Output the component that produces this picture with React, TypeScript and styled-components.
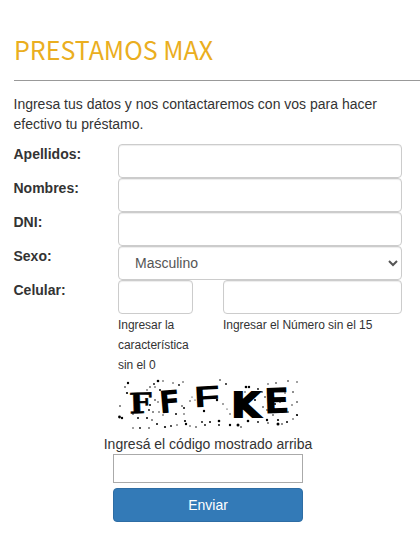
import React from "react";
import styled, { createGlobalStyle } from "styled-components";

const GlobalStyle = createGlobalStyle`
  * {
    box-sizing: border-box;
  }

  body {
    margin: 0;
    background: #fff;
    color: #333;
    font-family: "Liberation Sans", Arial, sans-serif;
    font-size: 14px;
    line-height: 20px;
    overflow: hidden;
  }
`;

const Page = styled.main`
  padding: 31px 0 0 14px;
`;

const Title = styled.h1`
  margin: 0;
  height: 49px;
  color: #eaae20;
  font-family: "Noto Sans CJK SC", sans-serif;
  font-size: 25px;
  font-weight: 400;
  line-height: 36px;
  white-space: nowrap;
`;

const Divider = styled.hr`
  margin: 0 0 13px;
  border: 0;
  border-top: 1px solid #999;
`;

const Intro = styled.p`
  margin: 0 18px 10px -0.5px;
`;

const Row = styled.div`
  display: grid;
  grid-template-columns: 104px 284px;
`;

const Label = styled.label`
  margin-left: -0.5px;
  font-weight: 700;
`;

const Input = styled.input`
  display: block;
  width: 100%;
  height: 34px;
  padding: 6px 12px;
  border: 1px solid #ccc;
  border-radius: 4px;
  background: #fff;
  color: #555;
  font: inherit;
  box-shadow: inset 0 1px 1px rgba(0, 0, 0, 0.075);
`;

const Select = styled(Input).attrs({ as: "select" })`
  padding-right: 0;
`;

const PhoneFields = styled.div`
  display: grid;
  grid-template-columns: 75px 179px;
  column-gap: 30px;
`;

const Hint = styled.small`
  display: block;
  padding-top: 1px;
  font-size: 12px;
  letter-spacing: -0.05px;
`;

const CaptchaArea = styled.div`
  display: flex;
  flex-direction: column;
  align-items: center;
  width: 388px;
`;

const CaptchaImage = styled.svg`
  display: block;
  width: 180px;
  height: 59px;
  font-weight: 700;
`;

const CaptchaInput = styled.input`
  width: 190px;
  height: 29px;
  padding: 2px 6px;
  border: 1px solid #aaa;
  font: inherit;
`;

const SubmitButton = styled.button`
  width: 190px;
  height: 34px;
  margin-top: 5px;
  padding: 6px 12px;
  border: 1px solid #2e6da4;
  border-radius: 4px;
  background: #337ab7;
  color: #fff;
  font: inherit;
`;

const specks = [
  [10, 8, 1.2], [7, 12, 0.8], [9, 18, 1.1], [2, 31, 0.8], [1.5, 42, 1.4],
  [4, 43, 1.2], [15, 39, 0.8], [20, 43, 1], [15, 53, 0.7], [22, 53, 0.9],
  [31, 53, 0.8], [32, 12, 0.8], [36, 9, 0.9], [40, 6, 1.3], [45, 6, 0.7],
  [37, 12, 0.7], [42, 15, 1], [55, 8, 0.7], [65, 7, 0.7], [61, 10, 0.9],
  [29, 15, 0.7], [37, 25, 0.8], [32, 30, 1], [31, 35, 0.9], [35, 37, 0.8],
  [40, 27, 0.7], [41, 37, 0.7], [29, 43, 1], [34, 45, 0.8], [39, 49, 1],
  [47, 52, 1.1], [53, 51, 0.9], [59, 50, 0.7], [64, 31, 0.8], [66, 33, 1],
  [66, 39, 0.7], [67, 46, 1.1], [68, 49, 1.2], [72, 51, 0.7], [78, 52, 0.8],
  [87, 50, 0.9], [84, 47, 0.9], [72, 26, 0.7], [74, 22, 0.6], [58, 39, 1],
  [45, 40, 0.7], [86, 36, 1.2], [77, 25, 0.6],
  [102, 5, 0.8], [108, 9, 0.9], [99, 25, 1.2], [105, 29, 0.7], [109, 34, 0.6],
  [92, 47, 1], [101, 46, 1.3], [101, 50, 0.9], [112, 50, 1.2], [120, 50, 1.5],
  [123, 52, 0.8], [112, 39, 0.7], [128, 12, 1.3], [131, 12, 1.2], [127, 17, 0.7],
  [140, 14, 0.9], [150, 9, 0.7], [158, 8, 0.8], [170, 6, 0.8], [179, 7, 0.7],
  [144, 17, 0.8], [120, 20, 0.9], [130, 21, 0.8], [137, 25, 1], [147, 22, 0.8],
  [157, 29, 1], [162, 27, 0.8], [145, 32, 0.8], [149, 35, 0.8], [130, 46, 1.3],
  [140, 47, 0.9], [149, 45, 1.2], [150, 48, 0.8], [155, 40, 0.8], [160, 45, 1.1],
  [160, 49, 1.5], [169, 47, 1], [164, 49, 0.8], [174, 30, 0.7], [179, 27, 0.8],
  [179, 40, 1.1], [175, 44, 0.7], [170, 37, 0.8], [167, 18, 0.7], [175, 17, 0.8],
];

interface FieldProps {
  id: string;
  label: string;
}

const Field: React.FC<FieldProps> = ({ id, label }) => (
  <Row>
    <Label htmlFor={id}>{label}:</Label>
    <Input id={id} type="text" />
  </Row>
);

const Captcha: React.FC = () => (
  <CaptchaImage viewBox="0 0 180 59">
    {specks.map(([x, y, r], index) => (
      <circle key={index} cx={x} cy={y} r={r} />
    ))}
    <text
      transform="translate(11.5 38.5) rotate(-2) scale(1.15 1)"
      fontFamily="DejaVu Serif"
      fontSize="28"
      stroke="#000"
      strokeWidth="0.5"
    >
      F
    </text>
    <text transform="translate(42 38.5) rotate(-5)" fontFamily="DejaVu Sans" fontSize="31">
      F
    </text>
    <text transform="translate(76.5 32.5) rotate(-3) scale(1.42 1)" fontFamily="Liberation Sans" fontSize="30">
      F
    </text>
    <text
      transform="translate(113.5 42) scale(1.12 1)"
      fontFamily="DejaVu Sans"
      fontSize="33"
      stroke="#000"
      strokeWidth="1.8"
    >
      K
    </text>
    <text transform="translate(146 38.5) rotate(-2) scale(1.1 1)" fontFamily="DejaVu Sans" fontSize="35">
      E
    </text>
  </CaptchaImage>
);

const App: React.FC = () => {
  return (
    <>
      <GlobalStyle />
      <Page>
        <Title>PRESTAMOS MAX</Title>
        <Divider />
        <Intro>
          Ingresa tus datos y nos contactaremos con vos para hacer efectivo tu
          préstamo.
        </Intro>
        <form onSubmit={(event) => event.preventDefault()}>
          <Field id="apellidos" label="Apellidos" />
          <Field id="nombres" label="Nombres" />
          <Field id="dni" label="DNI" />
          <Row>
            <Label htmlFor="sexo">Sexo:</Label>
            <Select id="sexo">
              <option>Masculino</option>
              <option>Femenino</option>
            </Select>
          </Row>
          <Row>
            <Label htmlFor="caracteristica">Celular:</Label>
            <PhoneFields>
              <div>
                <Input id="caracteristica" type="text" />
                <Hint>Ingresar la característica sin el 0</Hint>
              </div>
              <div>
                <Input id="numero" type="text" />
                <Hint>Ingresar el Número sin el 15</Hint>
              </div>
            </PhoneFields>
          </Row>
          <CaptchaArea>
            <Captcha />
            <label htmlFor="codigo">Ingresá el código mostrado arriba</label>
            <CaptchaInput id="codigo" type="text" />
            <SubmitButton type="submit">Enviar</SubmitButton>
          </CaptchaArea>
        </form>
      </Page>
    </>
  );
};

export default App;
